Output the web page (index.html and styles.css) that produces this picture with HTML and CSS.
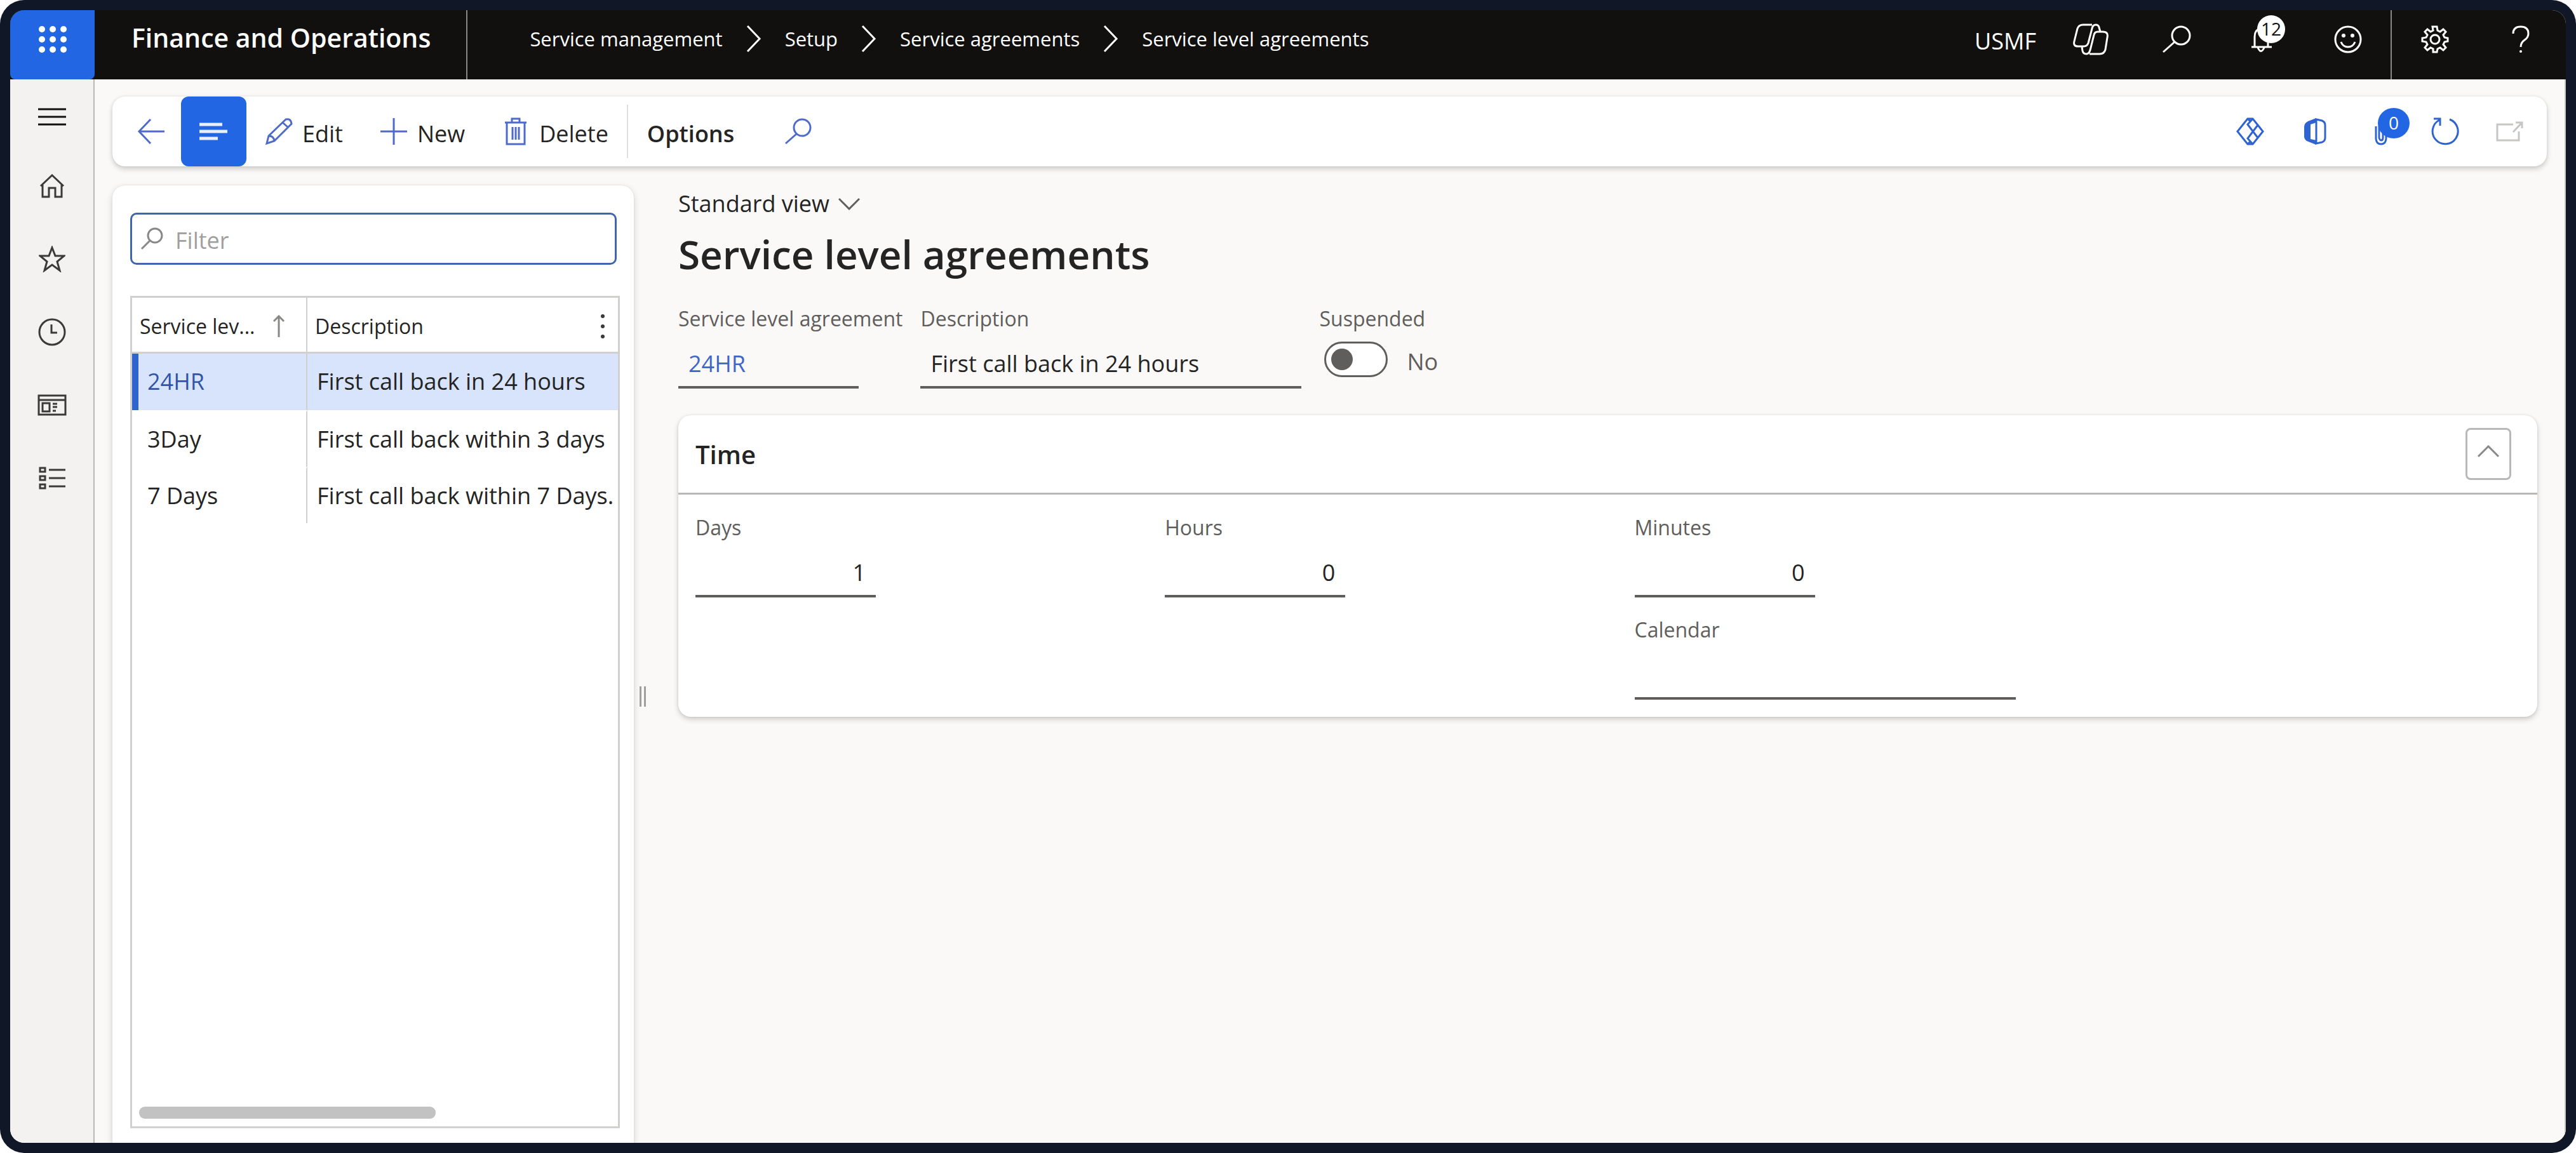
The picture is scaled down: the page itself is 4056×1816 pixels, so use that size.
FILE: index.html
```html
<!DOCTYPE html>
<html lang="en">
<head>
    <title>Service level agreements - Finance and Operations</title>
    <meta charset="utf-8">
    <link rel="stylesheet" href="styles.css">
</head>
<body>
    <div class="frame">
        <div class="app">

            <header class="topbar">
                <button class="waffle" aria-label="App launcher">
                    <svg width="44" height="44" viewBox="0 0 44 44" fill="#fff">
                        <circle cx="5" cy="6" r="5"/><circle cx="22" cy="6" r="5"/><circle cx="39" cy="6" r="5"/>
                        <circle cx="5" cy="22" r="5"/><circle cx="22" cy="22" r="5"/><circle cx="39" cy="22" r="5"/>
                        <circle cx="5" cy="38" r="5"/><circle cx="22" cy="38" r="5"/><circle cx="39" cy="38" r="5"/>
                    </svg>
                </button>
                <div class="product">Finance and Operations</div>
                <nav class="crumbs" aria-label="Breadcrumb">
                    <a href="#">Service management</a>
                    <svg width="24" height="44" viewBox="0 0 24 44"><path d="M2 2L21 22L2 42"/></svg>
                    <a href="#">Setup</a>
                    <svg width="24" height="44" viewBox="0 0 24 44"><path d="M2 2L21 22L2 42"/></svg>
                    <a href="#">Service agreements</a>
                    <svg width="24" height="44" viewBox="0 0 24 44"><path d="M2 2L21 22L2 42"/></svg>
                    <a href="#">Service level agreements</a>
                </nav>
                <div class="top-tools">
                    <button class="company">USMF</button>
                    <button class="top-btn" aria-label="Copilot">
                        <svg width="56" height="50" viewBox="0 0 56 50">
                            <path d="M30 2H16Q9 2 7 8L2 28Q0 36 8 36H17Q22 36 24 31L30 8Q31 2 36 2Q40 2 41 6L43 13"/>
                            <path d="M26 48H42Q49 48 51 41L54 22Q56 13 47 13H39Q34 13 33 18L27 42Q25 48 21 48Q16 48 15 43L14 37"/>
                        </svg>
                    </button>
                    <button class="top-btn" aria-label="Search">
                        <svg width="46" height="44" viewBox="0 0 46 44"><circle cx="30" cy="16" r="14"/><path d="M20 26L2 42"/></svg>
                    </button>
                    <button class="top-btn" aria-label="Notifications">
                        <svg width="44" height="44" viewBox="0 0 44 44"><path d="M10 34V18Q10 6 20 5Q31 6 31 18V34M5 34H37M15 35Q20 46 25 35"/></svg>
                        <span class="badge badge-white">12</span>
                    </button>
                    <button class="top-btn" aria-label="Feedback">
                        <svg width="46" height="46" viewBox="0 0 46 46"><circle cx="23" cy="23" r="20"/><path d="M12 27Q15 35 23 35Q31 35 34 27"/><circle class="dot" cx="16" cy="17" r="3"/><circle class="dot" cx="30" cy="17" r="3"/></svg>
                    </button>
                    <span class="top-line"></span>
                    <button class="top-btn" aria-label="Settings">
                        <svg width="46" height="46" viewBox="0 0 46 46">
                            <path d="M19 3L20 9L16 11L11 7L7 11L11 16L9 20L3 21V26L9 27L11 31L7 36L11 40L16 36L20 38L20 43H26L27 38L31 36L36 40L40 36L36 31L38 27L43 26V21L38 20L36 16L40 11L36 7L31 11L27 9L26 3Z"/>
                            <circle cx="23" cy="23" r="7"/>
                        </svg>
                    </button>
                    <button class="top-btn" aria-label="Help">
                        <svg width="30" height="46" viewBox="0 0 30 46"><path d="M3 14Q3 3 15 3Q27 3 27 14Q27 20 21 24Q15 28 15 35"/><circle class="dot" cx="15" cy="42" r="2"/></svg>
                    </button>
                </div>
            </header>

            <div class="shell">
                <nav class="rail" aria-label="Main">
                    <button class="rail-btn rail-menu" aria-label="Expand">
                        <svg width="44" height="30" viewBox="0 0 44 30"><path d="M0 3H44M0 15H44M0 27H44"/></svg>
                    </button>
                    <button class="rail-btn" aria-label="Home">
                        <svg width="40" height="40" viewBox="0 0 40 40"><path d="M2 20L20 3L38 20M5 18V37H15V23H25V37H35V18"/></svg>
                    </button>
                    <button class="rail-btn" aria-label="Favorites">
                        <svg width="42" height="42" viewBox="0 0 42 42"><path d="M21 3L26 16H40L29 25L33 39L21 30L9 39L13 25L2 16H16Z"/></svg>
                    </button>
                    <button class="rail-btn" aria-label="Recent">
                        <svg width="46" height="46" viewBox="0 0 46 46"><circle cx="23" cy="23" r="20"/><path d="M22 11V24H31"/></svg>
                    </button>
                    <button class="rail-btn" aria-label="Workspaces">
                        <svg width="46" height="36" viewBox="0 0 46 36"><path d="M2 3H44V33H2ZM2 10H44M8 15H19V28H8ZM24 16H31M24 21H31M24 27H29"/></svg>
                    </button>
                    <button class="rail-btn" aria-label="Modules">
                        <svg width="44" height="40" viewBox="0 0 44 40"><path d="M3 4H11V10H3ZM3 17H11V23H3ZM3 30H11V36H3ZM17 7H43M17 20H43M17 33H43"/></svg>
                    </button>
                </nav>

                <div class="content">
                    <div class="toolbar">
                        <button class="tool tool-back" aria-label="Back">
                            <svg width="44" height="42" viewBox="0 0 44 42"><path d="M21 2L3 21L21 40M3 21H43"/></svg>
                        </button>
                        <button class="tool tool-list" aria-label="Show list">
                            <svg width="44" height="30" viewBox="0 0 44 30"><path d="M0 4H36M0 15H44M0 26H29"/></svg>
                        </button>
                        <button class="tool">
                            <svg width="44" height="44" viewBox="0 0 44 44"><path d="M3 41L6 29L33 3Q41 1 42 10L15 37ZM6 29Q14 29 15 37M28 8L37 16"/></svg>
                            <span>Edit</span>
                        </button>
                        <button class="tool">
                            <svg width="44" height="44" viewBox="0 0 44 44"><path d="M22 1V43M1 22H43"/></svg>
                            <span>New</span>
                        </button>
                        <button class="tool">
                            <svg width="44" height="44" viewBox="0 0 44 44"><path d="M5 8H39M16 8V2H28V8M8 8V42H36V8M17 15V35M22 15V35M27 15V35"/></svg>
                            <span>Delete</span>
                        </button>
                        <span class="tool-line"></span>
                        <button class="tool tool-options"><span>Options</span></button>
                        <button class="tool" aria-label="Search actions">
                            <svg width="44" height="42" viewBox="0 0 44 42"><circle cx="28" cy="15" r="13"/><path d="M19 25L2 40"/></svg>
                        </button>
                        <div class="toolbar-right">
                            <button class="tool tool-icon" aria-label="Power Apps">
                                <svg width="46" height="46" viewBox="0 0 46 46"><path d="M19 3L3 23L19 43H27L43 23L27 3ZM27 3L19 12L35 33M27 43L19 34L35 13M19 3L24 8M19 43L24 38"/></svg>
                            </button>
                            <button class="tool tool-icon" aria-label="Open in Microsoft Office">
                                <svg width="36" height="44" viewBox="0 0 36 44"><path class="solid" d="M20 1L7 6Q1 9 1 15V30Q1 34 5 37L20 43V36L11 34V11L20 8Z"/><path d="M20 3L29 5Q34 7 34 12V32Q34 37 29 39L20 41Z"/></svg>
                            </button>
                            <button class="tool tool-icon" aria-label="Attachments">
                                <svg width="30" height="44" viewBox="0 0 30 44"><path d="M9 14V34Q10 42 17 42Q24 42 25 34V8M14 14V32Q15 36 17 36Q20 36 20 32V10"/></svg>
                                <span class="badge badge-blue">0</span>
                            </button>
                            <button class="tool tool-icon" aria-label="Refresh">
                                <svg width="46" height="46" viewBox="0 0 46 46"><path d="M31 4A20 20 0 1 1 15 5M6 3H16V14"/></svg>
                            </button>
                            <button class="tool tool-icon" disabled aria-label="Open in new window">
                                <svg width="44" height="34" viewBox="0 0 44 34"><path d="M28 6H3V31H37V17M28 18L42 3M32 3H42V12"/></svg>
                            </button>
                        </div>
                    </div>

                    <div class="columns">
                        <aside class="list-card">
                            <label class="filter">
                                <svg width="36" height="36" viewBox="0 0 36 36"><circle cx="23" cy="13" r="11"/><path d="M15 21L2 34"/></svg>
                                <input type="text" placeholder="Filter" aria-label="Filter">
                            </label>
                            <div class="grid">
                                <table>
                                    <thead>
                                        <tr>
                                            <th class="col-id">
                                                <div class="th-in">
                                                    <span>Service lev...</span>
                                                    <svg width="18" height="36" viewBox="0 0 18 36"><path d="M9 35V2M1 10L9 2L17 10"/></svg>
                                                </div>
                                            </th>
                                            <th>
                                                <div class="th-in">
                                                    <span>Description</span>
                                                    <svg class="dots" width="8" height="40" viewBox="0 0 8 40"><circle cx="4" cy="4" r="3"/><circle cx="4" cy="20" r="3"/><circle cx="4" cy="36" r="3"/></svg>
                                                </div>
                                            </th>
                                        </tr>
                                    </thead>
                                    <tbody>
                                        <tr class="selected"><td><a href="#">24HR</a></td><td>First call back in 24 hours</td></tr>
                                        <tr><td>3Day</td><td>First call back within 3 days</td></tr>
                                        <tr><td>7 Days</td><td>First call back within 7 Days.</td></tr>
                                    </tbody>
                                </table>
                                <div class="scroll"></div>
                            </div>
                        </aside>

                        <div class="splitter"><span></span></div>

                        <main class="detail">
                            <button class="view">Standard view
                                <svg width="34" height="20" viewBox="0 0 34 20"><path d="M1 2L17 18L33 2"/></svg>
                            </button>
                            <h1>Service level agreements</h1>

                            <div class="fields">
                                <div class="field">
                                    <label for="sla">Service level agreement</label>
                                    <input class="short link" id="sla" type="text" value="24HR">
                                </div>
                                <div class="field">
                                    <label for="desc">Description</label>
                                    <input class="long" id="desc" type="text" value="First call back in 24 hours">
                                </div>
                                <div class="field">
                                    <label for="susp">Suspended</label>
                                    <div class="switch">
                                        <input id="susp" type="checkbox" role="switch">
                                        <span>No</span>
                                    </div>
                                </div>
                            </div>

                            <section class="card">
                                <div class="card-head">
                                    <h2>Time</h2>
                                    <button class="collapse" aria-label="Collapse">
                                        <svg width="34" height="20" viewBox="0 0 34 20"><path d="M1 18L17 2L33 18"/></svg>
                                    </button>
                                </div>
                                <div class="card-body">
                                    <div class="field">
                                        <label for="days">Days</label>
                                        <input class="short num" id="days" type="text" value="1">
                                    </div>
                                    <div class="field">
                                        <label for="hours">Hours</label>
                                        <input class="short num" id="hours" type="text" value="0">
                                    </div>
                                    <div class="field">
                                        <label for="minutes">Minutes</label>
                                        <input class="short num" id="minutes" type="text" value="0">
                                    </div>
                                    <div class="field calendar">
                                        <label for="calendar">Calendar</label>
                                        <input class="long" id="calendar" type="text">
                                    </div>
                                </div>
                            </section>
                        </main>
                    </div>
                </div>
            </div>
        </div>
    </div>
</body>
</html>
```
FILE: styles.css
```css
*{
    box-sizing: border-box;
}
body{
    margin: 0;
    background: #fff;
    font-family: "Open Sans", "Noto Sans", sans-serif;
    font-size: 36px;
    color: #242424;
}
button, input{
    font: inherit;
    color: inherit;
    background: none;
    border: none;
    margin: 0;
    padding: 0;
    outline: none;
}
a{
    color: inherit;
    text-decoration: none;
}
svg{
    display: block;
    flex: none;
    fill: none;
    stroke: currentColor;
    stroke-width: 3px;
}

/* window frame */
.frame{
    height: 100vh;
    padding: 16px;
    background: #101828;
    border-radius: 38px;
}
.app{
    display: flex;
    flex-direction: column;
    height: 100%;
    overflow: hidden;
    background: #faf9f8;
    border-radius: 22px;
}

/* top bar */
.topbar{
    display: flex;
    flex: none;
    height: 109px;
    background: #11100f;
    color: #fff;
}
.waffle{
    display: flex;
    justify-content: center;
    width: 133px;
    padding-top: 24px;
    background: #2266e3;
    border-radius: 0 0 8px 8px;
}
.waffle svg{
    fill: #fff;
    stroke: none;
}
.product{
    display: flex;
    align-items: center;
    padding: 0 56px 24px 58px;
    border-right: 2px solid #8a8886;
    font-size: 41px;
    font-weight: 600;
}
.crumbs{
    display: flex;
    align-items: center;
    gap: 37px;
    padding: 0 0 20px 98px;
    font-size: 31px;
}
.top-tools{
    display: flex;
    margin-left: auto;
    padding-right: 4px;
}
.company{
    padding: 0 18px 12px 0;
}
.top-btn{
    position: relative;
    display: flex;
    align-items: center;
    justify-content: center;
    width: 135px;
    padding-bottom: 18px;
}
.top-line{
    width: 2px;
    background: #8a8886;
}
.dot{
    fill: currentColor;
    stroke: none;
}
.badge{
    position: absolute;
    border-radius: 50%;
    text-align: center;
}
.badge-white{
    top: 8px;
    left: 60px;
    width: 44px;
    height: 44px;
    background: #fff;
    color: #11100f;
    font-size: 28px;
    line-height: 42px;
}
.badge-blue{
    top: 18px;
    left: 48px;
    width: 50px;
    height: 48px;
    background: #2266e3;
    color: #fff;
    font-size: 28px;
    line-height: 46px;
}

/* left rail */
.shell{
    display: flex;
    flex: 1;
    min-height: 0;
}
.rail{
    display: flex;
    flex-direction: column;
    flex: none;
    width: 133px;
    padding-top: 8px;
    background: #f3f2f1;
    border-right: 2px solid #bab8b7;
    color: #3b3a39;
}
.rail-btn{
    display: flex;
    align-items: center;
    justify-content: center;
    height: 115px;
}
.rail-menu{
    height: 102px;
    color: #11100f;
}

/* action pane */
.content{
    display: flex;
    flex-direction: column;
    flex: 1;
    min-width: 0;
    padding: 27px 28px 0 28px;
    border-right: 2px solid #c8c6c4;
}
.toolbar{
    display: flex;
    flex: none;
    height: 110px;
    padding: 0 8px 0 10px;
    background: #fff;
    border-radius: 20px;
    box-shadow: 0 4px 8px rgba(0,0,0,.18), 0 0 4px rgba(0,0,0,.08);
}
.tool{
    position: relative;
    display: flex;
    align-items: center;
    gap: 15px;
    padding: 0 29px;
}
.tool svg{
    color: #4f6bc9;
}
.tool span:not(.badge){
    padding-top: 6px;
}
.tool-back{
    width: 98px;
}
.tool-list{
    width: 103px;
    background: #2266e3;
    border-radius: 12px;
}
.tool-list svg{
    color: #e8f0ff;
    stroke-width: 5px;
}
.tool-line{
    width: 2px;
    margin: 13px 0;
    background: #e1dfdd;
}
.tool-options{
    padding: 0 50px 0 30px;
    font-weight: 600;
}
.toolbar-right{
    display: flex;
    margin-left: auto;
}
.tool-icon{
    justify-content: center;
    width: 102px;
}
.tool-icon svg{
    color: #2f64d0;
}
.tool-icon .solid{
    fill: currentColor;
    stroke: none;
}
.tool-icon:disabled svg{
    color: #c8c6c4;
}

/* record list */
.columns{
    display: flex;
    flex: 1;
    min-height: 0;
    padding-top: 30px;
}
.list-card{
    display: flex;
    flex-direction: column;
    flex: 0 0 821px;
    padding: 43px 22px 23px 28px;
    background: #fff;
    border-radius: 20px 20px 0 0;
    box-shadow: 0 4px 12px rgba(0,0,0,.16), 0 0 3px rgba(0,0,0,.08);
}
.filter{
    display: flex;
    align-items: center;
    gap: 19px;
    height: 82px;
    margin: 0 5px 49px 0;
    padding-left: 13px;
    border: 3px solid #3f66ad;
    border-radius: 10px;
    color: #8a8886;
}
.filter input{
    flex: 1;
    min-width: 0;
    padding-top: 4px;
}
.filter input::placeholder{
    color: #a19f9d;
}
.grid{
    display: flex;
    flex-direction: column;
    justify-content: space-between;
    flex: 1;
    overflow: hidden;
    border: 3px solid #d2d0ce;
}
table{
    width: 100%;
    table-layout: fixed;
    border-spacing: 0;
}
th{
    height: 88px;
    padding: 4px 12px 0;
    border-bottom: 3px solid #d2d0ce;
    font-size: 32px;
    font-weight: 500;
    text-align: left;
}
.col-id{
    width: 276px;
}
th:first-child, td:first-child{
    border-right: 2px solid #d2d0ce;
}
.th-in{
    display: flex;
    align-items: center;
    justify-content: space-between;
    padding-right: 8px;
}
.th-in svg{
    color: #8a8886;
}
.col-id .th-in{
    padding-right: 22px;
}
.th-in .dots{
    fill: #3b3a39;
    stroke: none;
}
td{
    height: 89px;
    padding: 0 0 2px 15px;
    border-top: 3px solid #fff;
    white-space: nowrap;
}
td:first-child{
    padding-left: 24px;
}
.selected td{
    background: #d8e4fc;
    border-top: none;
}
.selected td:first-child{
    padding-left: 14px;
    border-left: 10px solid #2f64d0;
    color: #3355a8;
}
.scroll{
    width: 61%;
    height: 19px;
    margin: 0 0 12px 11px;
    background: #c2c2c2;
    border-radius: 9px;
}
.splitter{
    display: flex;
    align-items: center;
    flex: 0 0 70px;
    padding: 102px 0 0 9px;
}
.splitter span{
    width: 10px;
    height: 32px;
    border: solid #a19f9d;
    border-width: 0 3px;
}

/* record details */
.detail{
    flex: 1;
    min-width: 0;
    padding: 4px 15px 0 0;
}
.view{
    display: flex;
    align-items: center;
    gap: 14px;
    line-height: 50px;
}
.view svg{
    color: #605e5c;
}
h1{
    margin: 14px 0 40px;
    font-size: 62px;
    font-weight: 600;
    line-height: 80px;
}
.fields{
    display: flex;
    gap: 28px;
    margin-bottom: 42px;
}
.field{
    display: flex;
    flex-direction: column;
    align-items: flex-start;
}
.field label{
    font-size: 32px;
    line-height: 44px;
    color: #605e5c;
}
.field input[type=text]{
    height: 88px;
    padding: 12px 16px 0;
    border-bottom: 4px solid #605e5c;
}
.field .short{
    width: 284px;
}
.field .long{
    width: 600px;
}
.field .num{
    text-align: right;
}
.field .link{
    color: #3f66c8;
}
.switch{
    display: flex;
    align-items: center;
    gap: 30px;
    margin: 14px 0 0 8px;
    color: #605e5c;
}
.switch input{
    appearance: none;
    width: 100px;
    height: 56px;
    padding: 8px;
    background: #fff;
    border: 3px solid #605e5c;
    border-radius: 28px;
}
.switch input::before{
    content: "";
    display: block;
    width: 34px;
    height: 34px;
    background: #605e5c;
    border-radius: 50%;
}
.switch span{
    padding-top: 6px;
}
.card{
    background: #fff;
    border-radius: 20px;
    box-shadow: 0 4px 8px rgba(0,0,0,.18), 0 0 4px rgba(0,0,0,.08);
}
.card-head{
    display: flex;
    align-items: center;
    justify-content: space-between;
    height: 125px;
    padding: 0 41px 0 27px;
    border-bottom: 3px solid #bab8b7;
}
h2{
    margin: 0;
    font-size: 40px;
    font-weight: 600;
}
.collapse{
    display: flex;
    align-items: center;
    justify-content: center;
    width: 72px;
    height: 82px;
    padding-bottom: 8px;
    border: 3px solid #bab8b7;
    border-radius: 8px;
    color: #8a8886;
}
.card-body{
    display: grid;
    grid-template-columns: repeat(4, 1fr);
    gap: 29px 84px;
    padding: 30px 27px 27px;
}
.calendar{
    grid-column: 3;
}
```
